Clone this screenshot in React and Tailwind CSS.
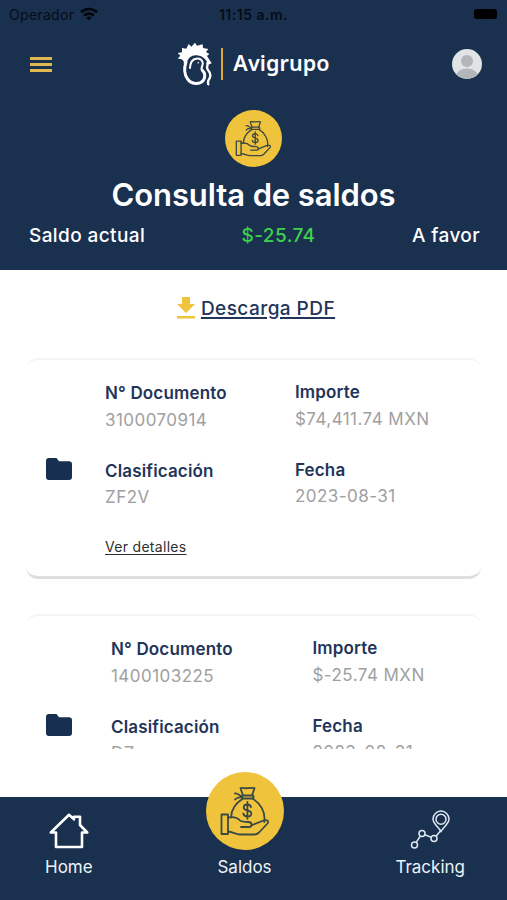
import React from "react";

const documents = [
  {
    number: "3100070914",
    amount: "$74,411.74 MXN",
    type: "ZF2V",
    date: "2023-08-31",
    left: "w-[190px]",
    start: "ml-[32px]",
  },
  {
    number: "1400103225",
    amount: "$-25.74 MXN",
    type: "DZ",
    date: "2023-08-31",
    left: "w-[201.5px]",
    start: "ml-[38px]",
  },
];

const MoneyBag = ({ className }) => (
  <svg viewBox="0 0 78 78" className={className} fill="none">
    <circle cx="39" cy="39" r="39" fill="#f0c33c" />
    <g
      stroke="#3b4a45"
      strokeWidth="1.8"
      strokeLinecap="round"
      strokeLinejoin="round"
    >
      <path d="M37 23.5 34.5 16.2c2.3-.9 4.5.4 7 0s5-.8 7 0L46 23.5" />
      <path d="M37 23.5h9.5c1.5 0 1.5 3 0 3H37c-1.5 0-1.5-3 0-3Z" />
      <path d="M36 24.5c-2.5-.5-4-3.5-7-3M36 25.5c-3-.5-5-.5-7 2" />
      <path d="M37 26.5C30 31 25 38 25.2 45.5M46.5 26.5C54 31 60 40 58.2 50" />
      <rect x="15.5" y="42.5" width="6.5" height="19.5" />
      <path d="M22 45.5c5-.9 9-.3 12 3 1.2 1.3 3 1.4 8.5 1.5 3.5.1 4.5 4.5 1 5H35" />
      <path d="M45 53.5 57.5 48.5c3-1.2 6 .5 4 3L53 60.5c-1.5 1.5-2.5 2-4.5 2H34c-4 0-7-2.5-12-3" />
      <path d="M45 35.2c-.4-2-2-2.7-3.7-2.7-2.2 0-3.6 1.2-3.6 2.9 0 4 7.6 2 7.6 6.1 0 2-1.7 3-3.8 3-2.2 0-3.800-1-4.200-3M41.400 30v16.800" />
    </g>
  </svg>
);

const Rooster = () => (
  <svg viewBox="22 20 108 132" className="h-[44px] w-[36px]">
    <path
      fill="#fff"
      d="M24 70 32 61 24 53 37 51 37 38 50 40 57 26 65 34 76 22 82 31 99 27 100 38 116 41 109 50 119 56 112 62 126 84 116 88C111 74 100 62 82 60 64 59 56 68 50 84L42 86C45 76 38 70 24 70Z"
    />
    <path
      fill="none"
      stroke="#fff"
      strokeWidth="9"
      strokeLinecap="round"
      d="M49 80C43 98 45 118 53 130 65 149 91 148 101 135 109 124 105 111 98 105"
    />
    <path
      fill="none"
      stroke="#fff"
      strokeWidth="6"
      strokeLinecap="round"
      d="M98 105C90 99 102 92 99 81 96 73 90 69 80 70 69 71 62 82 61 98"
    />
    <path
      fill="none"
      stroke="#fff"
      strokeWidth="7"
      strokeLinecap="round"
      d="M113 83C116 92 108 96 115 104 123 113 124 123 118 132 114 138 114 142 116 147"
    />
    <circle cx="86" cy="82" r="2.5" fill="#c9d2dc" />
  </svg>
);

const Field = ({ label, value }) => (
  <div className="h-[77.5px]">
    <p className="h-[26.5px] text-[17px] leading-[24px] font-semibold tracking-[0.15px] text-[#233459]">
      {label}
    </p>
    <p className="text-[17px] leading-[24px] tracking-[0.45px] text-[#a0a0a0]">
      {value}
    </p>
  </div>
);

const DocumentCard = ({ doc }) => (
  <div className="mb-[35px] flex h-[221px] shrink-0 rounded-[12px] border-t-2 border-b-3 border-t-[#f5f5f5] border-b-[#dedede] bg-white pl-[20px]">
    <svg
      viewBox="0 0 26 22"
      className="mt-[98px] h-[22px] w-[26px] shrink-0"
      fill="#172f50"
    >
      <path d="M3 0h7.5l2.5 3.300h10a3 3 0 0 1 3 3V19a3 3 0 0 1-3 3H3a3 3 0 0 1-3-3V3a3 3 0 0 1 3-3Z" />
    </svg>
    <div className={doc.start}>
      <div className="ml-px flex pt-[21px]">
        <div className={doc.left}>
          <Field label="N° Documento" value={doc.number} />
          <Field label="Clasificación" value={doc.type} />
        </div>
        <div className="-mt-px">
          <Field label="Importe" value={doc.amount} />
          <Field label="Fecha" value={doc.date} />
        </div>
      </div>
      <a className="ml-px block pt-px text-[14px] leading-[20px] tracking-[0.3px] text-[#303030] underline underline-offset-2">
        Ver detalles
      </a>
    </div>
  </div>
);

const App = () => {
  return (
    <div className="flex h-[900px] w-full flex-col overflow-hidden bg-white font-['Inter',sans-serif]">
      <header className="h-[270px] shrink-0 bg-[#19304f] text-white">
        <div className="grid h-7 grid-cols-3 items-center pr-[10px] pl-[9px] text-[14px] text-[#060c16]">
          <div className="flex items-center gap-[6px] tracking-[0.3px]">
            Operador
            <svg
              viewBox="0 0 18 14"
              className="h-[14px] w-[18px]"
              fill="none"
              stroke="#03070d"
              strokeWidth="2.6"
            >
              <path d="M1 5.2a11.5 11.5 0 0 1 16 0M4 8.7a7 7 0 0 1 10 0" />
              <path
                d="M9 13.5 6.2 10.8a4 4 0 0 1 5.6 0Z"
                fill="#03070d"
                stroke="none"
              />
            </svg>
          </div>
          <span className="pl-[1px] text-center font-semibold tracking-[0.5px]">
            11:15 a.m.
          </span>
          <span className="h-[10px] w-[23px] justify-self-end rounded-[3px] bg-black" />
        </div>
        <div className="flex h-[72px] items-center justify-between pr-[25px] pl-[30px]">
          <div className="flex flex-col gap-[3px]">
            <span className="h-[3px] w-[22px] bg-[#dfb94f]" />
            <span className="h-[3px] w-[22px] bg-[#dfb94f]" />
            <span className="h-[3px] w-[22px] bg-[#dfb94f]" />
          </div>
          <div className="flex items-center pl-[3px]">
            <Rooster />
            <span className="mr-[10px] ml-[8px] h-[32px] w-[2px] bg-[#dda92d]" />
            <span className="-mt-[2px] font-['Noto_Sans'] text-[21.5px] font-semibold tracking-[0.1px]">
              Avigrupo
            </span>
          </div>
          <svg viewBox="0 0 30 30" className="h-[30px] w-[30px]">
            <clipPath id="avatar">
              <circle cx="15" cy="15" r="15" />
            </clipPath>
            <g clipPath="url(#avatar)">
              <rect width="30" height="30" fill="#e1e3e4" />
              <circle cx="15" cy="12" r="6" fill="#b2b6b8" />
              <ellipse cx="15" cy="27" rx="11" ry="7.5" fill="#b2b6b8" />
            </g>
          </svg>
        </div>
        <MoneyBag className="mx-auto mt-[10px] h-[57px] w-[57px]" />
        <h1 className="mt-[8px] text-center text-[31px] leading-[40px] font-semibold tracking-[-0.1px]">
          Consulta de saldos
        </h1>
        <div className="mt-[7px] flex justify-between pr-[27px] pl-[29px] text-[19px] leading-[28px] font-medium tracking-[0.4px]">
          <span>Saldo actual</span>
          <span className="text-[#3fd04c]">$-25.74</span>
          <span>A favor</span>
        </div>
      </header>

      <div className="flex h-[88px] shrink-0 items-start justify-center gap-[6px] pt-[25px] pl-[5px]">
        <svg
          viewBox="0 0 18 22"
          className="mt-[2px] h-[22px] w-[18px]"
          fill="#f0c33c"
        >
          <path d="M5 0h8v7h5l-9 9-9-9h5ZM0 19h18v2.5H0Z" />
        </svg>
        <a className="text-[19px] leading-[28px] font-medium tracking-[0.45px] text-[#233459] underline decoration-2 underline-offset-2">
          Descarga PDF
        </a>
      </div>

      <main className="mx-[26px] flex h-[391px] shrink-0 flex-col overflow-hidden">
        {documents.map((doc) => (
          <DocumentCard key={doc.number} doc={doc} />
        ))}
      </main>

      <nav className="mt-[48px] flex h-[103px] shrink-0 justify-between bg-[#19304f] pr-[42px] pl-[45px] text-[17px] leading-[24px] text-[#eef3f8]">
        <div className="flex flex-col items-center">
          <svg
            viewBox="0 0 40 36"
            className="mt-[16px] mb-[6px] h-[36px] w-[40px]"
            fill="none"
            stroke="#fff"
            strokeWidth="2.6"
            strokeLinejoin="round"
          >
            <path d="M7 19.5H1.8L20 1.8l5 4.500V3.800h6V12l7.200 7.500H33V34H7Z" />
          </svg>
          Home
        </div>
        <div className="-mt-[25px] flex flex-col items-center pl-[1px]">
          <MoneyBag className="mb-[5px] h-[78px] w-[78px]" />
          Saldos
        </div>
        <div className="flex flex-col items-center">
          <svg
            viewBox="0 0 40 40"
            className="mt-[13px] mb-[5px] h-[40px] w-[40px]"
            fill="none"
            stroke="#dfe8f0"
            strokeWidth="1.5"
          >
            <circle cx="4.5" cy="35" r="3" />
            <circle cx="12" cy="23.5" r="3" />
            <circle cx="24" cy="28.500" r="3" />
            <path d="m6.200 32.300 4.200-6.300M14.800 24.700l6.500 2.700M26 26.200l5-6" />
            <path d="M31 21.500c-2.500-4.500-8-7.700-8-12.400a8 8 0 0 1 16 0c0 4.700-5.500 7.900-8 12.400Z" />
            <circle cx="31" cy="9.200" r="5" />
          </svg>
          Tracking
        </div>
      </nav>
    </div>
  );
};

export default App;
